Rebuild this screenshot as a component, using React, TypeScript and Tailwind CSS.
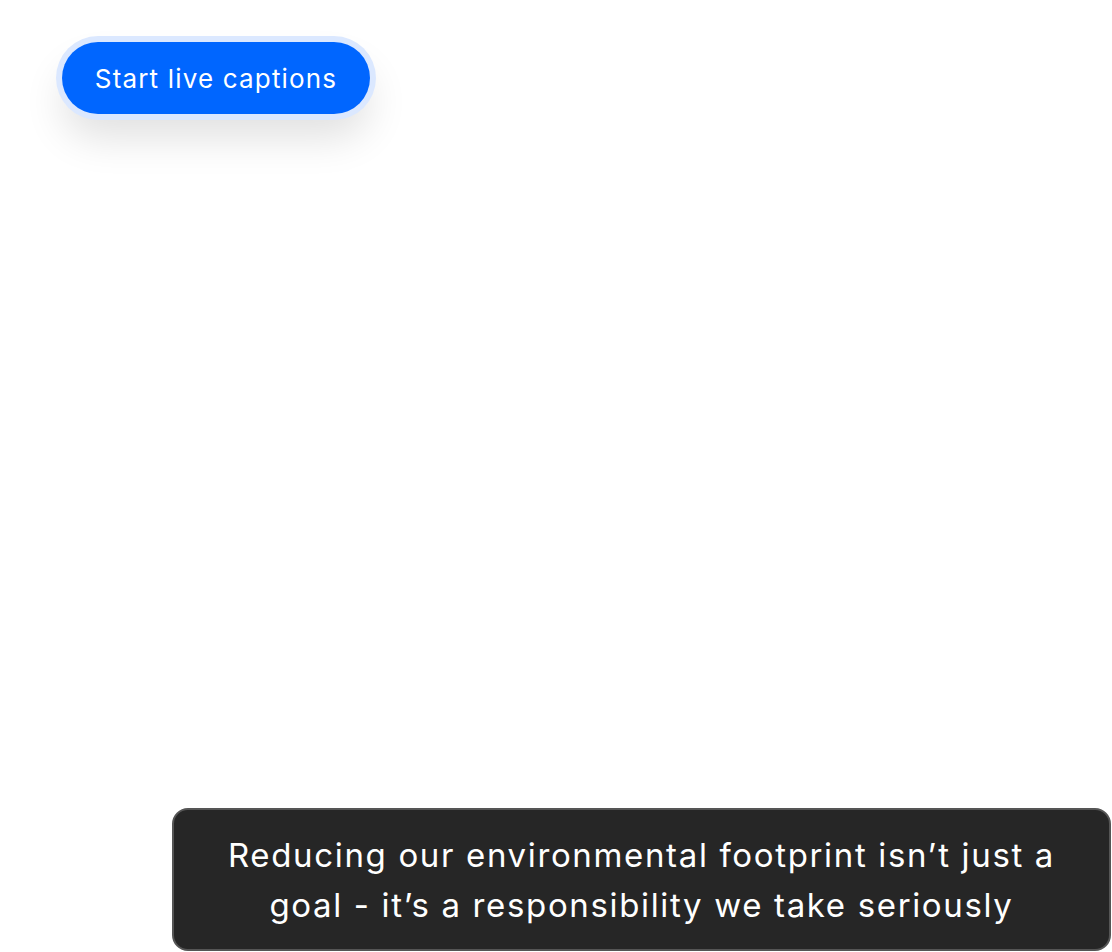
export default function App() {
  return (
    <div className="flex h-[952px] w-full flex-col bg-white font-['Inter',sans-serif]">
      {/* Start button */}
      <div className="pl-[56px] pt-[36px]">
        <button className="flex h-[72px] w-[308px] items-center justify-center rounded-full bg-[#0066ff] text-[26px] tracking-[0.045em] text-white shadow-[0_0_0_6px_#dbe8ff,0_24px_40px_rgba(0,0,0,0.12)] ml-[6px] mt-[6px]">
          Start live captions
        </button>
      </div>

      {/* Caption box */}
      <div className="mt-auto mb-px ml-[172px] mr-px flex h-[143px] items-center justify-center rounded-[16px] border-2 border-[#555555] bg-[#262626] px-8">
        <p className="text-center text-[33px] font-normal leading-[50px] tracking-[0.05em] text-white">
          Reducing our environmental footprint isn’t just a
          <br />
          goal - it’s a responsibility we take seriously
        </p>
      </div>
    </div>
  );
}
